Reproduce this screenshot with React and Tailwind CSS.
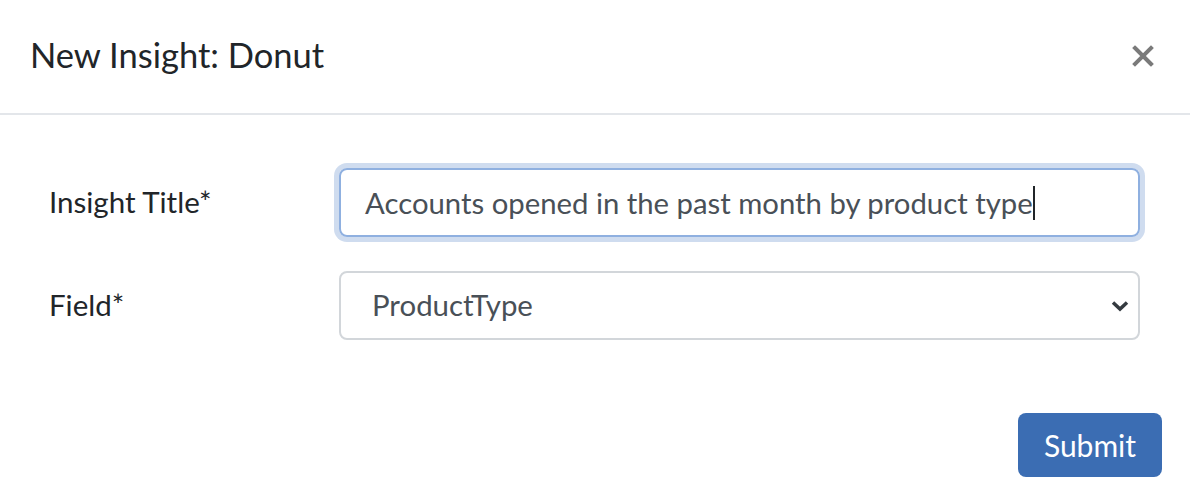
import React from "react";

const font = { fontFamily: "Lato, 'Noto Sans', sans-serif" };

export default function App() {
  return (
    <div className="w-[1190px] h-[502px] bg-white text-[#212529] overflow-hidden" style={font}>
      {/* header */}
      <div className="h-[115px] flex items-center justify-between pl-[30px] pr-[36px] border-b-2 border-[#e3e6ea]">
        <h5 className="text-[34.5px] leading-none pb-[2px]">New Insight: Donut</h5>
        <button className="text-[#7a7a7a] pb-[2px]">
          <svg width="22" height="22" viewBox="0 0 22 22">
            <path d="M3 3L19 19M19 3L3 19" stroke="currentColor" strokeWidth="4" strokeLinecap="square" />
          </svg>
        </button>
      </div>

      {/* body */}
      <div className="pt-[53px] pl-[49px] pr-[50px] flex flex-col gap-[34px]">
        <div className="flex items-center">
          <label className="w-[290px] text-[29.5px]">Insight Title*</label>
          <div className="flex-1 h-[69px] rounded-[8px] border-2 border-[#8fb0e0] ring-[5px] ring-[#cfdcef] flex items-center pl-[24px] text-[29.3px] text-[#495057]">
            <span>Accounts opened in the past month by product type</span>
            <span className="w-[2px] h-[34px] bg-[#212529]" />
          </div>
        </div>
        <div className="flex items-center">
          <label className="w-[290px] text-[29.5px]">Field*</label>
          <div className="flex-1 h-[69px] rounded-[8px] border-2 border-[#d2d6da] flex items-center justify-between pl-[31px] pr-[8px] text-[29.4px] text-[#495057]">
            <span>ProductType</span>
            <svg width="18" height="12" viewBox="0 0 18 12" className="mr-[1px]">
              <path d="M2 2.5L9 9L16 2.5" fill="none" stroke="#343a40" strokeWidth="3.5" />
            </svg>
          </div>
        </div>
      </div>

      {/* footer */}
      <div className="flex justify-end pr-[28px] pt-[73px]">
        <button className="w-[144px] h-[64px] rounded-[8px] bg-[#3b6db3] text-white text-[30px]">Submit</button>
      </div>
    </div>
  );
}
